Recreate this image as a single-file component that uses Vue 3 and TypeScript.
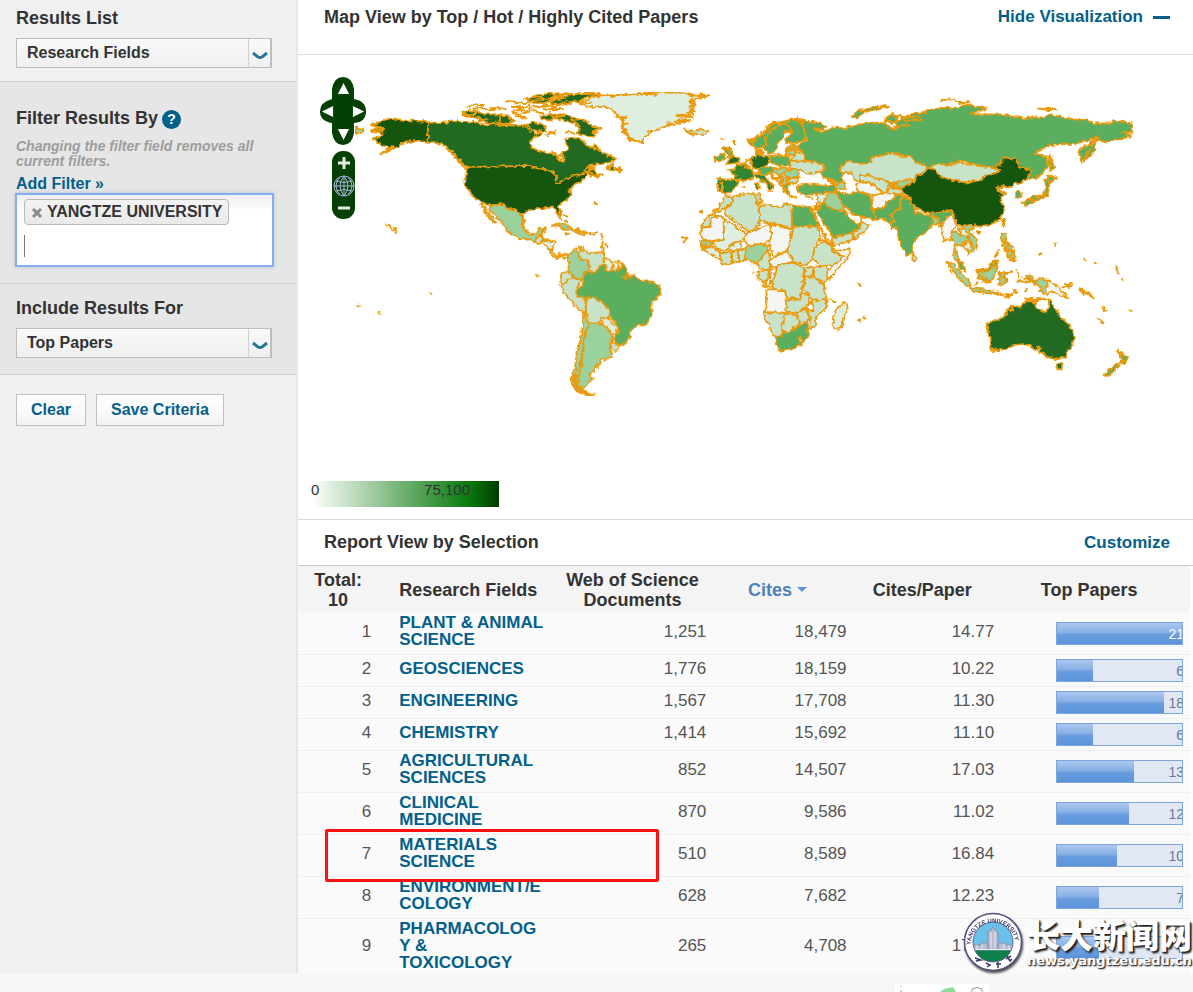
<script setup lang="ts">
import { ref } from 'vue'

interface Row {
  name: string
  docs: string
  cites: string
  ratio: string
  top: number
  marked?: boolean
}

interface Tile {
  x: number
  y: number
  shapes: [string, string][]
  lines: string
}

const resultsList = ref('Research Fields')
const include = ref('Top Papers')
const filterText = ref('')
const maxTop = 21

const rows: Row[] = [
  { name: 'PLANT & ANIMAL\nSCIENCE', docs: '1,251', cites: '18,479', ratio: '14.77', top: 21 },
  { name: 'GEOSCIENCES', docs: '1,776', cites: '18,159', ratio: '10.22', top: 6 },
  { name: 'ENGINEERING', docs: '1,567', cites: '17,708', ratio: '11.30', top: 18 },
  { name: 'CHEMISTRY', docs: '1,414', cites: '15,692', ratio: '11.10', top: 6 },
  { name: 'AGRICULTURAL\nSCIENCES', docs: '852', cites: '14,507', ratio: '17.03', top: 13 },
  { name: 'CLINICAL\nMEDICINE', docs: '870', cites: '9,586', ratio: '11.02', top: 12 },
  { name: 'MATERIALS\nSCIENCE', docs: '510', cites: '8,589', ratio: '16.84', top: 10, marked: true },
  { name: 'ENVIRONMENT/E\nCOLOGY', docs: '628', cites: '7,682', ratio: '12.23', top: 7 },
  { name: 'PHARMACOLOG\nY &\nTOXICOLOGY', docs: '265', cites: '4,708', ratio: '17.77', top: 7 },
]

// Country fills, from most to least cited
const A = '#135410'
const B = '#216a20'
const C = '#338632'
const D = '#5cae5e'
const E = '#9bd19c'
const F = '#c9e3c9'
const G = '#dfefdf'
const H = '#f4f6f4'

// Each region is drawn at three units per map pixel from its own origin
const tiles: Tile[] = [
  {
    x: 300, y: 60,
    shapes: [
      [A, '212,192 232,188 248,180 280,175 310,180 345,182 384,187 384,246 360,243 340,244 322,244 305,252 290,262 275,268 262,276 238,284 262,268 278,262 262,260 240,256 232,246 220,240 222,230 240,232 252,222 232,218 210,212 228,206 252,208 240,200'],
      [E, '165,202 178,204 195,209 180,218 168,220'],
      [B, '486,156 525,152 550,162 590,163 622,168 645,182 630,192 600,196 570,190 540,182 526,172 498,170 490,162'],
      [B, '488,154 505,150 530,154 520,164 500,166'],
    ],
    lines: 'M258 496L276 501M284 504L292 516L286 518M505 140L530 134L552 135M520 148L545 142L560 148M562 150L590 144L618 147M620 124L654 128M640 138L668 142M642 152L665 150L690 156M645 166L680 176M672 118L690 112M560 198L605 200M530 170L545 178L560 178M590 180L600 196M214 196L246 204M212 210L250 214M222 238L240 250M242 280L270 266M300 256L326 244L344 246M405 246L430 254L448 274M455 272L470 300L500 328M462 290L490 312M660 128L690 130',
  },
  {
    x: 500, y: 70,
    shapes: [
      [B, '-216,157 -180,160 -160,156 -130,150 -115,156 -90,155 -60,160 -40,166 -20,162 0,168 20,165 45,168 75,166 92,168 95,182 105,192 118,186 130,192 120,198 100,202 90,220 98,236 120,242 140,248 162,252 172,258 172,270 188,276 192,262 186,250 198,246 206,238 198,222 198,206 215,204 235,205 250,215 258,226 275,232 288,222 298,238 312,250 325,256 342,262 346,268 332,276 318,280 300,283 275,284 262,290 285,294 280,300 296,312 308,314 290,320 270,318 262,308 248,312 238,316 215,318 205,326 190,330 175,340 168,336 172,318 160,308 140,298 115,296 88,288 -95,291 -110,282 -130,265 -138,250 -155,238 -175,220 -195,216 -216,216'],
      [B, '318,298 335,284 342,292 360,296 362,304 340,302'],
      [B, '165,135 190,132 215,142 245,150 262,155 275,168 304,175 290,182 275,184 288,196 280,204 262,196 245,196 228,190 240,180 232,168 215,158 195,150 175,148'],
      [B, '78,165 95,155 120,160 140,172 138,186 115,182 95,180'],
      [B, '120,140 150,130 170,140 150,152 125,148'],
      [B, '0,140 20,135 35,150 30,160 0,162'],
      [B, '150,100 170,86 200,78 230,72 260,68 300,70 290,78 260,80 240,92 215,98 190,104 165,104'],
      [B, '80,88 110,76 150,70 200,70 170,80 150,90 140,100 100,98'],
      [A, '-95,291 88,288 115,296 140,298 160,308 172,318 168,336 175,340 190,330 205,326 215,318 238,316 248,312 258,304 264,312 250,326 245,334 222,345 212,358 212,375 200,390 180,402 176,410 184,432 180,446 170,430 162,412 140,414 120,416 90,420 75,422 65,438 45,416 32,420 10,402 -25,406 -55,400 -80,380 -95,360 -107,340 -105,315 -97,300'],
      [E, '-35,404 -25,406 10,402 32,420 45,416 65,438 72,440 70,465 75,482 92,494 112,490 118,474 138,472 132,488 122,494 120,506 108,500 104,514 90,508 75,510 50,500 20,484 18,472 5,458 -10,440 -30,424'],
      [E, '-57,400 -45,412 -30,434 -10,460 -20,456 -40,434'],
      [F, '104,514 122,496 130,510 122,522'],
      [G, '122,516 136,510 165,514 160,530 156,546 142,530'],
      [F, '142,530 158,548 175,560 200,552 205,566 185,562 170,566 152,552'],
      [E, '155,466 175,460 200,466 225,482 200,480 178,468'],
      [F, '226,482 242,484 262,488 256,493 230,492'],
      [G, '235,98 280,82 330,76 420,72 480,66 570,70 575,78 630,76 580,90 590,105 575,115 580,130 555,145 545,158 500,166 480,178 450,184 435,200 425,216 405,214 388,205 378,185 362,172 372,150 350,140 345,125 325,112 265,110 245,104'],
      [F, '552,178 575,184 600,178 625,182 615,192 575,194 560,186'],
    ],
    lines: 'M18 92L58 98M36 108L68 113L54 118M34 128L60 132L84 126M70 112L90 108L92 122M98 108L118 112L142 108M90 92L130 90M98 80L140 86L190 76M150 70L190 84L150 94M186 72L300 72M128 104L168 112M134 118L188 117M100 122L130 132M150 128L160 146M200 92L170 106M290 76L340 78L420 70L470 74M430 66L560 68L572 74L600 76L628 78M575 84L568 96L592 104L570 110L584 124L562 128L576 142L548 134L530 136L560 150L524 152L570 154L540 160M582 88L574 100L584 108M344 128L358 142L378 142L360 152L380 160L362 168L378 178L366 186L384 196L390 210L430 216M368 146L370 176L378 194M500 160L540 164M240 100L270 96M410 74L440 68M285 200L278 188L302 176L280 170M215 148L240 168M172 140L192 138M200 186L222 188M148 186L164 192M140 195L166 184M186 250L172 262L190 270M236 204L252 212M286 220L274 234L300 240M320 254L346 266M252 300L280 292L264 308M278 318L308 314M325 294L340 280L344 296L366 300M262 306L276 312M214 352L206 362L214 374M66 432L68 470M192 436L202 440M198 452L202 458M284 400L286 402M198 492L212 492M270 492L288 490M304 492L308 506M308 516L306 532M316 522L322 528M180 418L176 436L184 446M236 474L230 486L246 494M132 474L124 494M662 204L668 206M702 214L706 222M545 502L554 504M552 514L560 506M600 426L606 428M248 530L252 544M306 540L314 552',
  },
  {
    x: 520, y: 230,
    shapes: [
      [E, '145,75 168,58 180,65 178,85 205,92 210,120 195,125 190,150 165,145 140,125 148,105'],
      [F, '175,65 190,60 215,70 248,66 252,85 245,108 225,128 210,120 205,92 180,85'],
      [G, '250,80 275,95 300,95 312,105 300,118 262,122 255,105'],
      [F, '125,128 145,125 158,140 130,162 120,155'],
      [F, '120,165 130,162 158,140 165,145 185,150 168,182 172,195 195,205 198,250 180,240 150,210 125,175'],
      [F, '198,205 220,200 252,222 270,240 272,260 245,265 235,280 205,280 198,250'],
      [G, '245,268 265,262 275,280 292,290 290,312 272,310 260,292 245,282'],
      [E, '205,282 235,280 260,292 272,312 280,320 270,345 270,360 278,378 255,388 240,390 240,402 225,405 225,425 210,432 215,450 200,462 192,475 172,470 178,430 185,400 188,350 200,300'],
      [E, '190,250 200,252 205,285 196,310 188,350 182,400 178,430 172,465 185,480 215,495 200,498 170,482 155,462 155,440 165,410 170,375 182,330 188,290'],
      [F, '272,338 285,338 298,348 290,360 272,358'],
      [D, '168,182 190,165 195,125 225,128 235,112 255,105 260,122 300,120 312,105 322,122 318,140 340,136 360,150 400,155 422,172 424,185 410,205 395,220 395,255 380,280 350,288 332,300 330,320 312,345 300,345 280,330 295,308 295,290 272,262 270,240 252,222 220,200 195,205 172,195'],
    ],
    lines: 'M275 95L278 118M297 96L294 118M312 145L324 130L330 146M308 138L316 148M156 440L168 436L160 450L174 456L160 462L172 474L188 472L176 484L196 482L202 492L224 492M168 430L178 440L164 446M168 478L190 490M184 476L196 490M166 410L172 420M162 434L166 464M226 408L234 412M206 434L220 446M48 134L54 138M105 78L120 72L145 74M180 50L182 62M252 54L248 68',
  },
  {
    x: 690, y: 90,
    shapes: [
      [F, '60,375 85,355 100,330 105,318 125,320 130,338 95,358 75,370 75,380 62,385 62,410 32,412 45,390'],
      [F, '104,358 130,338 128,320 160,312 195,312 200,340 212,370 205,408 175,425 105,372'],
      [F, '195,312 210,312 215,335 202,344'],
      [F, '210,345 240,345 275,352 285,340 305,345 305,418 245,400 210,392'],
      [D, '306,348 350,350 365,352 372,375 388,408 306,408'],
      [H, '32,414 62,410 62,385 75,380 100,382 102,450 50,452 36,445'],
      [G, '102,388 170,430 165,450 130,460 110,482 85,480 65,455 102,450'],
      [H, '172,428 240,402 244,440 225,464 172,466 160,450'],
      [H, '245,402 305,418 300,455 292,480 250,500 240,470'],
      [F, '308,410 385,410 392,440 375,470 370,500 350,525 310,515 292,482 300,455'],
      [E, '168,470 205,462 236,466 225,495 200,522 180,512 162,510'],
      [F, '202,522 235,480 240,510 240,540 210,536'],
      [H, '240,510 292,485 312,515 280,522 242,532'],
      [F, '375,470 400,455 425,465 440,490 462,500 430,525 395,528 365,505'],
      [H, '430,485 480,475 475,500 440,540 415,570 412,545 430,525 462,500'],
      [F, '372,530 395,528 412,530 412,565 402,582 372,560'],
      [F, '345,535 370,528 368,558 345,560'],
      [F, '262,525 310,518 342,532 342,570 335,600 325,628 290,622 285,602 255,600 245,582'],
      [H, '242,540 262,530 255,560 235,585 222,580 240,565'],
      [F, '205,545 235,542 238,562 220,575 205,568'],
      [F, '345,562 372,562 402,585 410,627 372,632 355,612 340,600'],
      [H, '228,598 258,598 285,604 290,668 222,666 232,630'],
      [F, '290,628 330,630 335,612 355,612 360,640 325,668 290,665'],
      [F, '362,632 410,627 408,655 378,680 378,705 358,718 360,680 350,655 372,662'],
      [F, '320,668 345,658 360,680 350,698 328,692'],
      [F, '220,668 295,668 278,690 275,740 250,738'],
      [F, '280,672 318,672 330,700 298,725 276,728'],
      [D, '256,742 275,740 276,728 298,725 330,705 350,700 360,735 330,765 300,778 270,782 260,765'],
      [G, '325,748 334,742 338,750 328,756'],
      [G, '468,634 474,655 450,718 432,718 428,690 438,662'],
      [E, '30,452 48,450 65,458 68,472 34,470'],
      [G, '34,472 68,472 90,485 90,508 65,492 48,486'],
      [F, '90,490 122,485 128,520 94,524'],
      [F, '125,482 143,482 146,515 128,519'],
      [F, '146,480 168,474 164,510 148,514'],
      [G, '110,478 140,455 158,466 148,482'],
      [D, '175,150 205,140 235,112 255,100 290,92 340,88 352,98 335,98 345,130 350,148 320,158 290,160 285,148 305,128 285,124 280,140 262,160 262,170 252,188 235,192 225,180 222,168 200,172 182,165'],
      [D, '96,172 118,170 122,182 130,190 125,200 112,205 120,195 104,186'],
      [B, '126,196 150,206 145,218 122,222 106,222 118,214'],
      [D, '76,200 100,190 104,205 92,214 74,212'],
      [C, '112,240 132,238 140,226 162,220 186,240 190,265 165,272 135,268 134,252'],
      [C, '84,266 110,268 146,272 142,285 125,308 105,312 94,302 84,306'],
      [B, '185,205 205,195 235,198 238,220 222,230 215,240 195,238 186,228'],
      [D, '238,198 270,194 298,200 300,225 270,228 240,218'],
      [D, '198,178 214,178 210,194 198,192'],
      [C, '192,255 220,246 225,262 252,290 240,302 228,280 205,268'],
      [C, '198,280 206,278 206,296 198,298'],
      [D, '205,238 225,228 258,235 250,250 210,252'],
      [E, '250,236 288,232 296,240 275,254 255,250'],
      [E, '288,240 322,238 328,260 298,264 282,252'],
      [E, '270,254 292,264 290,280 276,278'],
      [F, '295,265 322,264 318,280 296,280'],
      [D, '278,282 300,284 290,294 300,318 284,304'],
      [F, '300,212 345,212 370,216 402,225 400,240 372,252 345,250 325,238 300,235'],
      [F, '305,205 320,186 345,195 346,212 302,212'],
      [E, '284,182 300,165 325,165 326,180 310,196 288,192'],
      [D, '320,290 350,282 390,286 430,285 436,305 400,310 350,314 322,305'],
      [G, '380,315 415,308 412,335 382,338'],
      [E, '412,308 438,308 452,330 462,358 432,360 402,340'],
      [D, '372,348 402,340 432,360 465,365 480,390 508,402 508,415 470,435 430,445 410,410 390,385'],
      [F, '425,445 470,432 488,430 488,450 430,470'],
      [F, '490,430 508,415 515,395 537,405 520,430 490,448'],
      [E, '414,270 460,276 468,296 440,298 430,282'],
      [D, '438,300 455,308 475,312 500,304 535,314 545,322 545,345 562,385 545,388 518,382 495,375 475,355 462,350 448,325'],
      [D, '485,80 505,62 545,52 598,48 560,60 520,70 500,86'],
    ],
    lines: 'M225 166L228 140L250 115L275 102M304 124L294 102L270 100M180 152L200 150L188 164M232 108L250 98L280 102L300 86L336 88L350 98L320 96M176 152L206 142L238 112M98 146L100 148M132 152L134 158M98 172L116 180L124 176L118 190M96 275L96 306M162 224L170 210L184 206L180 224M164 232L184 236L190 246M196 172L204 186L216 184L210 198M218 188L220 198M188 252L210 246M234 304L246 306M240 254L262 272L276 290L290 300M250 262L280 270M262 250L274 270L268 282M282 306L298 316M276 296L292 300M300 320L316 322M350 322L368 326M156 292L166 292M284 184L310 180L326 178M290 178L324 168M368 362L384 350M360 354L372 374M378 340L380 360L392 352M366 358L400 430L426 460M400 438L412 456M384 446L426 466L426 484M30 366L34 366M186 552L192 544M34 464L50 464M40 478L52 472M216 586L240 592L250 582M338 560L346 580L336 578M365 632L370 660M424 628L436 634M502 690L514 692M520 686L524 680M506 580L512 590M350 722L354 730M480 362L490 372M512 392L516 380M420 272L440 284L452 276M402 264L430 274M0 14L60 16L20 26L0 36L16 46L0 62',
  },
  {
    x: 860, y: 80,
    shapes: [
      [D, '-30,244 -55,255 -60,270 -48,280 -55,292 -45,312 -80,302 -110,292 -120,280 -105,262 -110,252 -140,245 -165,240 -165,225 -180,210 -185,195 -160,180 -165,160 -175,128 -170,125 -135,126 -100,138 -110,148 -140,145 -115,158 -80,142 -50,145 -10,134 40,128 75,130 82,140 105,146 120,140 106,132 75,125 80,112 94,104 110,108 108,124 125,120 122,108 140,112 165,98 200,98 200,92 240,84 300,82 325,74 380,86 330,103 420,103 490,115 510,112 550,112 570,104 640,118 685,120 700,130 750,130 760,122 817,130 817,156 790,158 815,170 780,176 740,186 720,180 700,188 715,172 690,180 640,192 570,195 520,222 560,228 562,262 545,285 510,300 490,296 515,270 480,262 465,236 430,232 420,255 398,262 360,258 300,242 280,250 220,256 205,262 165,245 150,228 95,220 35,232 35,248 0,252'],
      [D, '705,188 708,208 690,225 665,248 657,215 675,198'],
      [D, '568,226 576,230 578,250 586,264 572,275 566,250'],
      [F, '-55,255 -30,244 0,252 35,248 35,232 95,220 130,232 150,228 165,245 203,260 190,278 168,288 162,300 120,302 92,312 75,298 50,296 20,284 0,288 0,304 -22,298 -20,282 -40,276 -55,282 -60,268'],
      [F, '0,286 20,284 50,296 75,300 92,320 76,338 55,325 25,308 0,302'],
      [H, '-12,312 22,306 48,322 72,340 50,346 25,342 -10,330'],
      [E, '88,312 120,302 162,300 165,306 120,324 88,322'],
      [F, '82,326 120,326 130,342 84,340'],
      [H, '35,350 60,342 105,338 100,358 80,370 65,385 38,388'],
      [D, '38,388 65,385 80,370 100,358 108,344 125,345 152,350 124,360 120,385 95,405 105,430 85,428 75,415 50,417 42,405'],
      [D, '120,360 128,348 155,362 155,372 165,385 210,400 240,396 265,392 278,398 262,418 240,435 215,432 210,445 170,475 158,490 155,520 142,528 125,500 112,465 110,440 100,445 85,428 105,425 92,405 120,385'],
      [G, '162,384 210,400 208,408 165,396'],
      [E, '215,408 238,414 235,432 218,434'],
      [F, '158,518 171,535 165,544 157,540'],
      [F, '207,262 235,252 278,256 285,244 310,252 355,258 398,262 420,272 400,282 372,290 365,300 320,308 265,298 235,285 228,270'],
      [A, '120,326 165,306 168,288 190,280 205,262 228,270 235,285 265,298 320,308 365,300 372,290 400,282 420,272 398,262 420,255 430,232 465,236 480,262 515,270 505,295 490,303 460,315 440,325 430,316 408,325 425,335 436,345 420,350 430,375 432,395 415,420 395,432 360,440 345,436 330,432 305,440 290,432 282,410 278,395 260,390 240,396 200,398 175,385 152,370 155,355 140,345'],
      [A, '347,455 361,451 358,462'],
      [D, '425,420 436,418 430,440'],
      [H, '275,400 284,425 292,440 278,450 285,470 280,482 262,478 252,482 248,455 240,440 255,420'],
      [E, '278,452 300,465 325,470 328,482 310,488 305,498 290,494 288,520 300,540 294,550 280,530 284,495 275,470'],
      [E, '312,436 334,432 338,445 328,455 352,480 350,505 326,524 320,512 338,500 332,478 316,455'],
      [G, '298,445 310,444 326,464 322,470 300,462'],
      [G, '308,492 336,488 332,508 315,508'],
      [D, '292,540 310,548 316,572 300,568'],
      [E, '258,545 280,552 305,580 330,605 328,622 300,600 275,565'],
      [E, '330,624 370,628 418,638 418,644 370,638 335,632'],
      [E, '350,572 380,570 410,556 408,580 400,590 388,608 355,598'],
      [D, '356,574 380,566 395,548 412,540 416,552 395,562 375,576'],
      [E, '418,580 455,574 430,585 440,600 430,612 415,615 420,600'],
      [E, '425,462 438,462 434,482 455,500 462,520 465,540 450,542 440,515 426,498'],
      [E, '495,588 518,586 518,600 540,594 560,602 560,642 540,632 545,625 520,610'],
      [H, '560,600 590,615 610,640 625,654 600,645 580,636 560,642'],
      [D, '465,338 480,330 485,350 466,355'],
      [D, '487,365 520,350 550,345 558,325 555,300 566,296 568,320 562,348 525,362 495,380'],
      [D, '560,290 574,288 592,295 570,306'],
    ],
    lines: 'M245 60L285 58L290 66L325 66L298 72M535 86L590 88L560 92M-2 94L40 82L86 78M75 124L110 128M90 146L114 138L150 136M104 124L120 104L136 122L184 120M140 112L180 110M710 172L690 190L706 206M690 208L672 238M782 158L816 158M760 124L750 132M572 224L574 256M530 222L550 228M84 316L112 312L96 322L118 320M432 316L412 330L436 340M424 484L450 490L440 508L462 516L446 530L464 538M434 494L446 516M418 510L404 530M418 576L456 576M424 588L442 604M416 600L422 616M472 572L478 592M470 604L520 606M490 594L516 598M514 596L530 608M410 640L446 642L440 652L466 636M462 630L466 636M494 632L500 626M610 622L634 612M616 612L626 622M662 630L684 642L700 654M538 524L544 520M586 492L588 498M670 538L678 540M704 548L708 550M770 562L774 580M784 594L790 598M490 368L510 356L520 366M530 352L556 342M500 656L560 658M0 616L2 618M272 574L276 578M342 614L350 608M240 432L224 410M566 286L590 298M388 606L350 580M398 546L410 560',
  },
  {
    x: 940, y: 200,
    shapes: [
      [B, '140,370 165,360 190,352 200,330 222,315 240,324 250,308 270,302 290,304 285,320 310,336 322,335 328,298 335,302 340,320 352,328 360,350 380,368 400,390 403,410 395,440 380,455 378,470 350,478 330,474 315,465 302,455 298,440 288,452 272,436 245,432 215,436 200,446 170,452 150,448 153,425 142,395'],
      [B, '346,492 368,490 365,506 354,508'],
      [D, '530,450 548,464 568,470 555,490 538,492 546,474'],
      [D, '530,490 540,496 520,515 504,528 488,526 505,512'],
    ],
    lines: 'M198 344L204 330L214 334L222 316M258 296L272 302L294 302M272 304L284 312M326 300L328 322M294 440L302 456L310 460M140 380L146 404M256 274L260 270M372 252L396 258L394 246M422 268L434 284M438 274L462 294M488 320L496 332M568 332L578 332M470 354L492 370M530 450L548 462M540 490L566 474M206 290L228 274M180 284L196 292M152 444L170 450',
  },
]
</script>

<template>
  <div class="page">
    <div class="shell">
      <aside class="side">
        <section class="block">
          <label class="heading" for="results">Results List</label>
          <div class="pick">
            <select id="results" v-model="resultsList"><option>Research Fields</option></select>
            <svg class="chev" viewBox="0 0 16 9" aria-hidden="true"><path d="M1 2L6 6Q8 7 10 6L15 2" /></svg>
          </div>
        </section>
        <section class="block tinted filter">
          <div class="heading-row">
            <label class="heading" for="filter">Filter Results By</label>
            <button class="help" type="button" aria-label="Help">?</button>
          </div>
          <p class="hint">Changing the filter field removes all current filters.</p>
          <a class="add" href="#">Add Filter »</a>
          <div class="tags">
            <span class="tag">
              <button type="button" aria-label="Remove"><svg viewBox="0 0 10 10" aria-hidden="true"><path d="M1 1L9 9M9 1L1 9" /></svg></button>YANGTZE UNIVERSITY
            </span>
            <div class="entry"><i class="caret"></i><input id="filter" v-model="filterText" type="text" /></div>
          </div>
        </section>
        <section class="block tinted include">
          <label class="heading" for="include">Include Results For</label>
          <div class="pick">
            <select id="include" v-model="include"><option>Top Papers</option></select>
            <svg class="chev" viewBox="0 0 16 9" aria-hidden="true"><path d="M1 2L6 6Q8 7 10 6L15 2" /></svg>
          </div>
        </section>
        <div class="actions">
          <button type="button">Clear</button>
          <button type="button">Save Criteria</button>
        </div>
      </aside>

      <main class="main">
        <header class="bar top">
          <h2>Map View by Top / Hot / Highly Cited Papers</h2>
          <a class="hide" href="#">Hide Visualization<i></i></a>
        </header>

        <section class="map">
          <svg class="world" viewBox="298 55 895 426" preserveAspectRatio="xMinYMin meet" role="img" aria-label="World map">
            <defs>
              <filter id="rough" x="0" y="0" width="100%" height="100%">
                <feTurbulence type="fractalNoise" baseFrequency="0.22" numOctaves="2" seed="4" result="n" />
                <feDisplacementMap in="SourceGraphic" in2="n" scale="5" xChannelSelector="R" yChannelSelector="G" />
              </filter>
            </defs>
            <g filter="url(#rough)">
              <g v-for="(t, i) in tiles" :key="i" :transform="`translate(${t.x} ${t.y}) scale(.33333)`">
                <polygon v-for="(s, j) in t.shapes" :key="j" :points="s[1]" :fill="s[0]" />
                <path :d="t.lines" class="coast" />
              </g>
              <path class="coast thin" d="M392 229L397 231M357 305L361 306M378 312L380 313M430 293L433 295" />
            </g>
          </svg>
          <div class="pan">
            <svg viewBox="0 0 46 69" aria-hidden="true">
              <path d="M12 12Q14 0 23 0T34 12V22Q46 24 46 34.500T34 46V56Q32 68 23 68T12 56V46Q0 44 0 34.500T12 22Z" />
            </svg>
            <button class="n" type="button" aria-label="Pan up"><svg viewBox="0 0 14 12"><path d="M7 0L13 12H1Z" /></svg></button>
            <button class="w" type="button" aria-label="Pan left"><svg viewBox="0 0 12 14"><path d="M0 7L12 1V13Z" /></svg></button>
            <button class="e" type="button" aria-label="Pan right"><svg viewBox="0 0 12 14"><path d="M12 7L0 1V13Z" /></svg></button>
            <button class="s" type="button" aria-label="Pan down"><svg viewBox="0 0 14 12"><path d="M7 12L13 0H1Z" /></svg></button>
          </div>
          <div class="zoom">
            <button type="button" aria-label="Zoom in"><svg viewBox="0 0 14 14"><path d="M7 1V13M1 7H13" /></svg></button>
            <button type="button" aria-label="Zoom to world">
              <svg class="globe" viewBox="0 0 22 22"><circle cx="11" cy="11" r="10" /><path d="M11 1V21M1 11H21M3 6Q11 9 19 6M3 16Q11 13 19 16M11 1Q3 11 11 21M11 1Q19 11 11 21M7 2Q-1 11 7 20M15 2Q23 11 15 20" /></svg>
            </button>
            <button type="button" aria-label="Zoom out"><svg viewBox="0 0 14 14"><path d="M1 7H13" /></svg></button>
          </div>
          <div class="legend"><span>0</span><span>75,100</span></div>
        </section>

        <header class="bar report">
          <h2>Report View by Selection</h2>
          <a href="#">Customize</a>
        </header>

        <table>
          <colgroup><col class="c1" /><col class="c2" /><col class="c3" /><col class="c4" /><col class="c5" /><col class="c6" /></colgroup>
          <thead>
            <tr>
              <th>Total:<br />10</th>
              <th class="field">Research Fields</th>
              <th>Web of Science<br />Documents</th>
              <th><a class="sorted" href="#">Cites<i></i></a></th>
              <th>Cites/Paper</th>
              <th class="last">Top Papers</th>
            </tr>
          </thead>
          <tbody>
            <tr v-for="(r, i) in rows" :key="r.name">
              <td class="rank">{{ i + 1 }}<i v-if="r.marked" class="mark"></i></td>
              <td class="field"><a href="#">{{ r.name }}</a></td>
              <td class="docs">{{ r.docs }}</td>
              <td class="cites">{{ r.cites }}</td>
              <td class="ratio">{{ r.ratio }}</td>
              <td class="last">
                <div class="gauge" :class="{ full: r.top === maxTop }">
                  <div class="fill" :style="{ width: (r.top / maxTop) * 100 + '%' }"></div>
                  <span>{{ r.top }}</span>
                </div>
              </td>
            </tr>
          </tbody>
        </table>
      </main>
    </div>

    <footer class="foot">
      <svg viewBox="0 0 94 8" aria-hidden="true">
        <rect width="94" height="8" fill="#fff" />
        <path d="M45 8L49 5L58 3L61 8Z" fill="#8bdc92" />
        <path d="M77 8V5Q82 2 87 5V8M6 2V3M6 6V8" fill="none" stroke="#999" stroke-width="1" />
      </svg>
    </footer>

    <div class="brand">
      <svg viewBox="0 0 60 60" aria-hidden="true">
        <defs>
          <clipPath id="disc"><circle cx="30" cy="30" r="20" /></clipPath>
          <path id="ring" d="M7.500 33A22.500 22.500 0 1 1 52.500 33" />
        </defs>
        <circle cx="30" cy="30" r="28.500" fill="#fff" stroke="#53517c" stroke-width="1.500" />
        <g clip-path="url(#disc)">
          <rect width="60" height="60" fill="#69c0e9" />
          <rect y="38" width="60" height="22" fill="#0b8048" />
          <path d="M25 38V20L28 18L30 15L32 18L35 20V38ZM9 33H18V31H25V38H9ZM35 31H43V33H51V38H35Z" fill="#b9bdd4" stroke="#8d92b4" stroke-width="1" />
          <path d="M8 37.500H52M14 33V38M19 32V38M41 32V38M46 33V38M28 20V36M32 20V36" stroke="#e7e9f2" stroke-width="1" />
        </g>
        <circle cx="30" cy="30" r="20" fill="none" stroke="#67668e" stroke-width="1" />
        <text font-size="6" font-weight="bold" fill="#3b3968"><textPath href="#ring">YANGTZE UNIVERSITY</textPath></text>
        <path d="M12 46L18 48L13 49M23 51L27 53L24 55M33 52L38 52M35 50V56M43 47L48 44M44 44L47 49L49 47" fill="none" stroke="#3b3968" stroke-width="1.500" />
      </svg>
      <div class="words"><strong>长大新闻网</strong><span>news.yangtzeu.edu.cn</span></div>
    </div>
  </div>
</template>

<style>
body { margin: 0; }
</style>

<style scoped>
.page {
  position: relative;
  display: flex;
  flex-direction: column;
  height: 100vh;
  overflow: hidden;
  background: #fff;
  color: #333;
  font-family: "Liberation Sans", Arial, sans-serif;
  font-size: 17px;
}
* { box-sizing: border-box; }
a { color: #02608a; font-weight: bold; text-decoration: none; }
button, select, input { font: inherit; color: inherit; }
.shell { flex: 1; min-height: 0; display: flex; overflow: hidden; }

.side { flex: none; width: 298px; background: #f0f0f0; border-right: 2px solid #e6e6e6; }
.block { padding: 8px 24px 13px 16px; border-bottom: 1px solid #d2d2d2; }
.tinted { background: #e6e6e6; }
.heading { display: block; font-size: 18px; font-weight: bold; line-height: 20px; }
.pick { position: relative; display: flex; margin-top: 10px; }
.pick select {
  appearance: none;
  width: 100%;
  height: 30px;
  padding: 0 40px 1px 10px;
  border: 1px solid #bdbdbd;
  border-right-width: 2px;
  border-radius: 0;
  background: linear-gradient(#f9f9f9, #efefef);
  font-size: 16px;
  font-weight: bold;
}
.pick::after { content: ""; position: absolute; top: 1px; bottom: 1px; right: 23px; width: 1px; background: #cfcfcf; }
.chev { position: absolute; right: 4px; top: 13px; width: 16px; height: 9px; }
.chev path { fill: none; stroke: #277595; stroke-width: 3; }
.filter { padding: 25px 22px 16px 15px; }
.heading-row { display: flex; align-items: center; gap: 4px; padding-left: 1px; }
.help { width: 19px; height: 19px; margin-top: 3px; padding: 0; border: 0; border-radius: 50%; background: #02608a; color: #fff; font-size: 14px; font-weight: bold; line-height: 19px; }
.hint { margin: 10px 0 6px 1px; color: #9d9d9d; font-size: 14px; font-style: italic; font-weight: bold; line-height: 15px; }
.add { display: block; padding-left: 1px; font-size: 16px; line-height: 18px; }
.tags { height: 74px; padding: 4px 7px; border: 2px solid #86adf2; background: linear-gradient(#eee, #fff 16px); box-shadow: 0 0 4px #b0bccf; }
.tag { display: inline-flex; align-items: center; height: 26px; padding: 0 6px 1px 7px; border: 1px solid #b9b9b9; border-radius: 4px; background: linear-gradient(#f3f3f3, #e9e9e9); font-size: 16px; font-weight: bold; line-height: 22px; white-space: nowrap; }
.tag button { display: grid; width: 10px; margin: 3px 5px 0 0; padding: 0; border: 0; background: none; }
.tag button svg { width: 10px; height: 10px; fill: none; stroke: #8a8a8a; stroke-width: 3; }
.entry { display: flex; align-items: center; height: 22px; margin-top: 10px; }
.caret { width: 1px; height: 22px; background: #777; }
.entry input { width: 100%; padding: 0; border: 0; outline: 0; background: none; }
.include { padding-top: 14px; padding-bottom: 16px; }
.actions { display: flex; gap: 10px; padding: 19px 16px; }
.actions button { height: 32px; padding: 0 14px; border: 1px solid #c0c0c0; background: linear-gradient(#fff, #f4f4f4); color: #02608a; font-size: 16px; font-weight: bold; }

.main { flex: 1; min-width: 0; }
.bar { display: flex; align-items: center; justify-content: space-between; padding: 0 23px 0 26px; }
.bar h2 { margin: 0; font-size: 18px; font-weight: bold; }
.top { height: 55px; padding-bottom: 20px; border-bottom: 1px solid #ddd; }
.report { height: 47px; border-top: 1px solid #ddd; border-bottom: 1px solid #ccc; }
.hide { display: flex; align-items: center; gap: 10px; }
.hide i { width: 17px; height: 3px; background: #02608a; }

.map { position: relative; padding-bottom: 12px; }
.world { display: block; width: 100%; height: auto; }
.world polygon { stroke: #e99a0c; stroke-width: 5; stroke-linejoin: round; }
.coast { fill: none; stroke: #ec9a08; stroke-width: 6; stroke-linejoin: round; stroke-linecap: round; }
.thin { stroke-width: 1.500; }
.pan { position: absolute; left: 22px; top: 22px; width: 46px; height: 69px; display: grid; grid-template: 23px 23px 23px / 15px 16px 15px; }
.pan > svg { position: absolute; inset: 0; width: 46px; height: 69px; fill: #044004; }
.pan button, .zoom button { position: relative; display: grid; place-items: center; padding: 0; border: 0; background: none; }
.pan button svg { width: 13px; height: 13px; fill: #fff; }
.n, .s { grid-column: 2; }
.n { grid-row: 1; }
.w { grid-area: 2 / 1; }
.e { grid-area: 2 / 3; }
.s { grid-row: 3; }
.zoom { position: absolute; left: 34px; top: 96px; width: 23px; height: 68px; display: grid; grid-template-rows: 24px 21px 23px; border-radius: 11px; background: #044004; }
.zoom svg { width: 14px; height: 14px; fill: none; stroke: #e4ece4; stroke-width: 3; }
.zoom .globe { width: 22px; height: 22px; stroke: #aab0dc; stroke-width: 1; }
.legend { display: flex; justify-content: space-between; width: 188px; height: 26px; margin-left: 13px; padding-right: 29px; background: linear-gradient(to right, #fff, #087a0c 84%, #003c00); font-size: 15px; line-height: 17px; }

table { width: calc(100% - 3px); border-collapse: collapse; table-layout: fixed; background: #fafafa; }
.c1 { width: 9%; }
.c2 { width: 20%; }
.c3 { width: 17%; }
.c4 { width: 15.500%; }
.c5 { width: 17%; }
.c6 { width: 21.500%; }
th { height: 47px; padding: 0; background: #f4f4f4; font-size: 18px; line-height: 20px; }
th.field { text-align: left; padding-left: 21px; }
.sorted { color: #4d82b8; }
.sorted i { display: inline-block; margin: 0 0 4px 5px; border: 5px solid transparent; border-top-color: #5b94d4; border-bottom: 0; }
th.last { padding-right: 10px; }
td { height: 32px; padding: 0 0 4px; border-bottom: 1px solid #ededed; color: #555; text-align: right; }
td.rank { position: relative; padding-right: 7px; }
td.field { padding: 1px 0 6px 21px; text-align: left; line-height: 17px; }
td.field a { display: block; white-space: pre-line; font-size: 17px; }
td.docs { padding-right: 2px; }
td.cites { padding-right: 0; }
td.ratio { padding-right: 4px; }
td.last { padding: 0 7px 1px 58px; }
.mark { position: absolute; z-index: 1; left: 27px; top: -6px; bottom: -6px; width: 334px; border: 3px solid #fd1010; border-radius: 2px; }
.gauge { position: relative; height: 23px; overflow: hidden; border: 1px solid #7fa6dc; background: #e1e8f3; color: #667c9b; font-size: 14px; line-height: 22px; }
.gauge .fill { height: 100%; background: linear-gradient(#abc7ee, #86aee4 48%, #699ddf 52%, #5c93da); }
.gauge span { position: absolute; right: -2px; top: 0; }
.full { color: #fff; }

.foot { flex: none; height: 19px; display: flex; align-items: flex-end; padding-left: 75%; background: #f7f7f7; }
.foot svg { width: 94px; height: 8px; }
.brand { position: absolute; right: 1px; bottom: 20px; z-index: 2; display: flex; align-items: center; gap: 4px; }
.brand svg { width: 60px; height: 60px; filter: drop-shadow(1px 2px 1px #555); }
.words { display: flex; flex-direction: column; color: #fff; }
.words strong { font-family: "Noto Sans CJK SC", sans-serif; font-size: 33px; font-weight: 900; line-height: 36px; text-shadow: 2px 2px 2px #222, 1px 1px 1px #444; white-space: nowrap; }
.words span { font-family: "DejaVu Sans", sans-serif; font-size: 13px; font-weight: bold; line-height: 17px; text-shadow: 1px 1px 2px #222, 1px 1px 1px #555; }
</style>
